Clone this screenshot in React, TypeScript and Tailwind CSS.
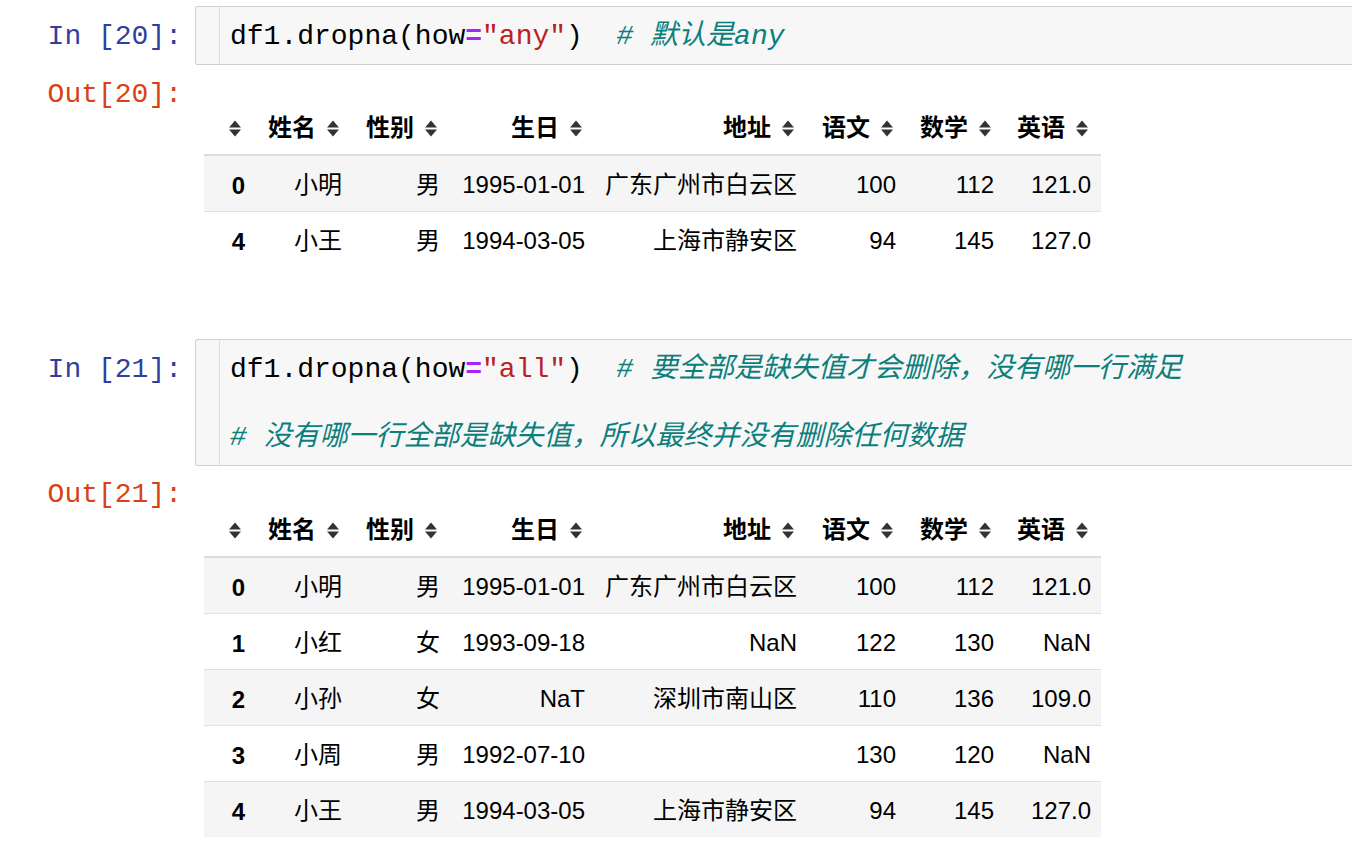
import React from "react";

const MONO = { fontFamily: '"Liberation Mono", "Noto Sans CJK SC", monospace' };
const SANS = { fontFamily: '"Liberation Sans", "Noto Sans CJK SC", sans-serif' };

function SortIcon() {
  return (
    <svg width="14" height="17" viewBox="0 0 14 17" className="shrink-0">
      <path d="M1 7.5 L7 0.5 L13 7.5 Z" fill="#333333" />
      <path d="M1 9.5 L7 16.5 L13 9.5 Z" fill="#333333" />
    </svg>
  );
}

const headers = ["姓名", "性别", "生日", "地址", "语文", "数学", "英语"];

type Row = string[];

function DataTable({ rows }: { rows: Row[] }) {
  return (
    <div className="w-[897px] text-[24px] text-black" style={SANS}>
      <div className="grid grid-cols-[51px_97px_98px_145px_212px_99px_98px_97px] h-[52px] border-b-2 border-[#dcdcdc]">
        <div className="flex items-center justify-end pr-[13px] pb-[2px]">
          <SortIcon />
        </div>
        {headers.map((h) => (
          <div key={h} className="flex items-center justify-end gap-[10px] pr-[12px] pb-[2px] font-bold leading-[24px]">
            <span>{h}</span>
            <SortIcon />
          </div>
        ))}
      </div>
      {rows.map((r, i) => (
        <div
          key={i}
          className={
            "grid grid-cols-[51px_97px_98px_145px_212px_99px_98px_97px] items-center leading-[24px] " +
            (i % 2 === 0 ? "bg-[#f5f5f5] " : "bg-white ") +
            (i > 0 ? "border-t border-[#e0e0e0] h-[56px]" : "h-[55px]")
          }
        >
          <div className="text-right pr-[10px] font-bold pt-[5px]">{r[0]}</div>
          {r.slice(1).map((c, j) => (
            <div key={j} className="text-right pr-[10px] pt-[2px] whitespace-nowrap">
              {c}
            </div>
          ))}
        </div>
      ))}
    </div>
  );
}

function Prompt({ kind, n }: { kind: "In" | "Out"; n: number }) {
  return (
    <div
      className={
        "w-[195px] shrink-0 text-right pr-[13px] text-[28px] whitespace-pre " +
        (kind === "In" ? "pt-[14px] text-[#303F9F] leading-[34px]" : "text-[#D84315] leading-[34px]")
      }
      style={MONO}
    >
      {kind === "In" ? `In [${n}]:` : `Out[${n}]:`}
    </div>
  );
}

function CodeBox({ children }: { children: React.ReactNode }) {
  return (
    <div className="w-[1200px] shrink-0 flex border border-[#cfcfcf] rounded-[2px] bg-[#f7f7f7]">
      <div className="w-[24px] shrink-0 border-r border-[#dddddd]" />
      <div className="pl-[10px] pt-[13px] pb-[10px] text-[28px] leading-[34px] text-black whitespace-pre" style={MONO}>
        {children}
      </div>
    </div>
  );
}

const Eq = () => <span className="text-[#AA22FF] font-bold">=</span>;
const Str = ({ s }: { s: string }) => <span className="text-[#BA2121]">{s}</span>;
const Cm = ({ s }: { s: string }) => <span className="text-[#0b7f7c] italic">{s}</span>;

export default function App() {
  const rows1: Row[] = [
    ["0", "小明", "男", "1995-01-01", "广东广州市白云区", "100", "112", "121.0"],
    ["4", "小王", "男", "1994-03-05", "上海市静安区", "94", "145", "127.0"],
  ];
  const rows2: Row[] = [
    ["0", "小明", "男", "1995-01-01", "广东广州市白云区", "100", "112", "121.0"],
    ["1", "小红", "女", "1993-09-18", "NaN", "122", "130", "NaN"],
    ["2", "小孙", "女", "NaT", "深圳市南山区", "110", "136", "109.0"],
    ["3", "小周", "男", "1992-07-10", "", "130", "120", "NaN"],
    ["4", "小王", "男", "1994-03-05", "上海市静安区", "94", "145", "127.0"],
  ];
  return (
    <div className="w-[1352px] h-[866px] overflow-hidden bg-white pt-[6px]">
      {/* Cell 20 */}
      <div className="flex">
        <Prompt kind="In" n={20} />
        <CodeBox>
          <div>
            df1.dropna(how<Eq />
            <Str s={'"any"'} />)  <Cm s="# 默认是any" />
          </div>
        </CodeBox>
      </div>
      <div className="flex mt-[13px]">
        <Prompt kind="Out" n={20} />
        <div className="pl-[9px] pt-[26px]">
          <DataTable rows={rows1} />
        </div>
      </div>

      {/* Cell 21 */}
      <div className="flex mt-[72px]">
        <Prompt kind="In" n={21} />
        <CodeBox>
          <div>
            df1.dropna(how<Eq />
            <Str s={'"all"'} />)  <Cm s="# 要全部是缺失值才会删除，没有哪一行满足" />
          </div>
          <div> </div>
          <div>
            <Cm s="# 没有哪一行全部是缺失值，所以最终并没有删除任何数据" />
          </div>
        </CodeBox>
      </div>
      <div className="flex mt-[12px]">
        <Prompt kind="Out" n={21} />
        <div className="pl-[9px] pt-[28px]">
          <DataTable rows={rows2} />
        </div>
      </div>
    </div>
  );
}
